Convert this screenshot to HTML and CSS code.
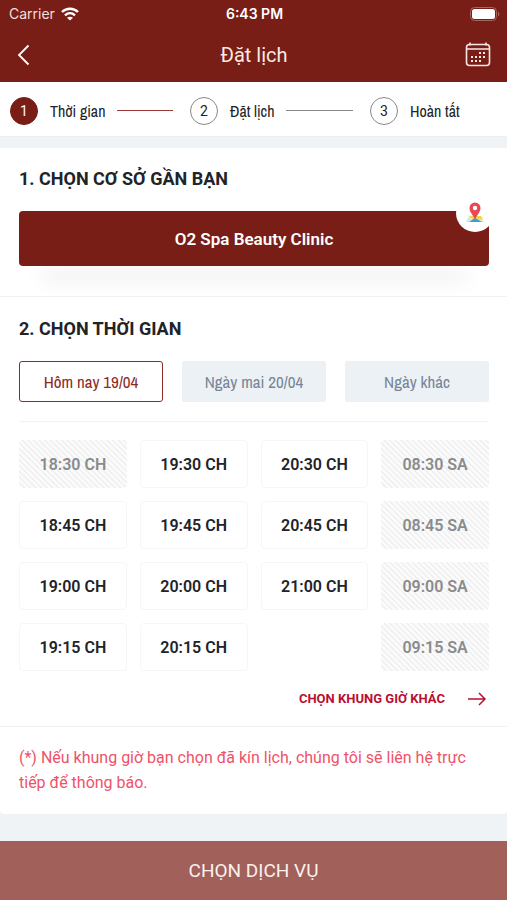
FILE: index.html
```html
<!DOCTYPE html>
<html lang="vi">
<head>
<meta charset="utf-8">
<meta name="viewport" content="width=device-width, initial-scale=1">
<title>Đặt lịch</title>
<link rel="stylesheet" href="styles.css">
</head>
<body>
<div class="app">
  <header class="top">
    <div class="status">
      <span class="carrier">Carrier
        <svg width="18" height="14" viewBox="0 0 18 14" fill="none" stroke="#fff" stroke-width="2.4" aria-hidden="true"><path d="M1 5C5.500 .6 12.500 .6 17 5M4 8.300c3-2.700 7-2.700 10 0"/><path d="M9 13.600 6 10.800c1.700-1.500 4.300-1.500 6 0z" fill="#fff" stroke="none"/></svg>
      </span>
      <span class="clock">6:43 PM</span>
      <svg class="battery" width="30" height="14" viewBox="0 0 30 14" aria-hidden="true"><rect x=".5" y=".5" width="26" height="13" rx="4" fill="none" stroke="#a8655e"/><rect x="2" y="2" width="23" height="10" rx="2.500" fill="#fff"/><path d="M28 4.500c1.800 1 1.800 4 0 5z" fill="#a8655e"/></svg>
    </div>
    <div class="bar">
      <button class="icon-button" aria-label="Quay lại"><svg width="14" height="22" viewBox="0 0 14 22" fill="none" stroke="#fff" stroke-width="1.800"><path d="M11.500 1.500 2 11l9.500 9.500"/></svg></button>
      <h1 class="title">Đặt lịch</h1>
      <button class="icon-button end" aria-label="Lịch"><svg width="26" height="26" viewBox="0 0 26 26" fill="none" stroke="#f8e8e5" stroke-width="1.600"><rect x="1.500" y="2.500" width="23" height="21" rx="3"/><path d="M1.500 7h23M5 .5v3M21 .5v3"/><path d="M14 11h2M18 11h2M6 15h2M10 15h2M14 15h2M18 15h2M6 19h2M10 19h2M14 19h2" stroke-width="2"/></svg></button>
    </div>
  </header>

  <ol class="steps">
    <li class="step active"><span class="num">1</span><span class="label">Thời gian</span><span class="line"></span></li>
    <li class="step"><span class="num">2</span><span class="label">Đặt lịch</span><span class="line"></span></li>
    <li class="step"><span class="num">3</span><span class="label">Hoàn tất</span></li>
  </ol>

  <main class="card">
    <section class="place">
      <h2 class="heading">1. CHỌN CƠ SỞ GẦN BẠN</h2>
      <div class="branch-wrap">
        <button class="branch">O2 Spa Beauty Clinic
          <span class="pin"><svg width="18" height="22" viewBox="0 0 18 22" aria-hidden="true"><path d="M3 14h12l3 6H0z" fill="#d4eadb"/><path d="M3 14h12l1.500 3L8 18.500z" fill="#f6d447"/><path d="M3 20l6-4 7 4z" fill="#3d9bd8"/><path d="M9 17C6 12 3.500 9.500 3.500 6a5.500 5.500 0 0 1 11 0c0 3.500-2.500 6-5.500 11z" fill="#eb4856"/><circle cx="9" cy="6" r="2.200" fill="#fff"/></svg></span>
        </button>
      </div>
    </section>

    <section class="time">
      <h2 class="heading">2. CHỌN THỜI GIAN</h2>
      <div class="days">
        <button class="day selected">Hôm nay 19/04</button>
        <button class="day">Ngày mai 20/04</button>
        <button class="day">Ngày khác</button>
      </div>
      <div class="slots">
        <button class="slot" disabled>18:30 CH</button>
        <button class="slot">18:45 CH</button>
        <button class="slot">19:00 CH</button>
        <button class="slot">19:15 CH</button>
        <button class="slot">19:30 CH</button>
        <button class="slot">19:45 CH</button>
        <button class="slot">20:00 CH</button>
        <button class="slot">20:15 CH</button>
        <button class="slot">20:30 CH</button>
        <button class="slot">20:45 CH</button>
        <button class="slot">21:00 CH</button>
        <span></span>
        <button class="slot" disabled>08:30 SA</button>
        <button class="slot" disabled>08:45 SA</button>
        <button class="slot" disabled>09:00 SA</button>
        <button class="slot" disabled>09:15 SA</button>
      </div>
      <a class="more" href="#">CHỌN KHUNG GIỜ KHÁC <svg width="18" height="14" viewBox="0 0 18 14" fill="none" stroke="#b80f32" stroke-width="1.500" aria-hidden="true"><path d="M0 7h17M11 1l6 6-6 6"/></svg></a>
    </section>

    <p class="note">(*) Nếu khung giờ bạn chọn đã kín lịch, chúng tôi sẽ liên hệ trực tiếp để thông báo.</p>
  </main>

  <button class="submit">CHỌN DỊCH VỤ</button>
</div>
</body>
</html>
```
FILE: styles.css
```css
* { box-sizing: border-box; }

body {
  margin: 0;
  background: #eff3f6;
  color: #212329;
  font-family: Roboto, "Noto Sans", sans-serif;
}

button {
  margin: 0;
  padding: 0;
  border: 0;
  font-family: inherit;
}

h1, h2, p, ol { margin: 0; padding: 0; }

svg { display: block; }

.app {
  min-height: 100vh;
  display: flex;
  flex-direction: column;
}

.top {
  background: #781e16;
  color: #fff;
}

.status, .bar {
  display: grid;
  grid-template-columns: 1fr auto 1fr;
  align-items: center;
}

.status {
  height: 27px;
  padding: 0 7px 0 9px;
  font-family: Inter, Roboto, sans-serif;
  font-size: 14px;
}

.carrier {
  display: flex;
  align-items: center;
  gap: 6px;
  color: #f3dfdc;
}

.clock { font-weight: 600; }

.battery { justify-self: end; }

.bar {
  height: 55px;
  padding: 0 16px 0 17px;
}

.icon-button {
  justify-self: start;
  background: none;
}

.icon-button.end { justify-self: end; }

.title {
  color: #f8e8e5;
  font-size: 20px;
  font-weight: 400;
}

.steps {
  display: grid;
  grid-template-columns: 1fr 1fr 90px;
  height: 55px;
  padding: 3px 47px 0 10px;
  background: #fff;
  border-bottom: 1px solid #e9eef0;
  list-style: none;
}

.step {
  display: flex;
  align-items: center;
  gap: 12px;
  padding-right: 17px;
  white-space: nowrap;
  font-family: "Archivo Narrow", "Roboto Condensed", "Liberation Sans Narrow", Roboto, sans-serif;
  font-size: 16px;
}

.step:last-child { padding-right: 0; }

.num {
  display: grid;
  flex: none;
  place-items: center;
  width: 28px;
  height: 28px;
  border: 1px solid #888;
  border-radius: 50%;
  font-family: Roboto, sans-serif;
  font-size: 14px;
}

.line {
  flex: 1;
  height: 1px;
  background: #888;
}

.active .num {
  background: #781e16;
  border-color: #781e16;
  color: #fff;
}

.active .line { background: #9b3a34; }

.card {
  margin-top: 11px;
  background: #fff;
  border-radius: 0 0 4px 4px;
}

.place {
  padding: 19px 18px 30px 19px;
  border-bottom: 1px solid #f0f2f3;
}

.heading {
  font-size: 18px;
  font-weight: 700;
  line-height: 24px;
}

.branch-wrap { margin-top: 20px; }

.branch {
  position: relative;
  display: block;
  width: 100%;
  height: 55px;
  border-radius: 4px;
  background: #781e16;
  box-shadow: 0 36px 20px -22px rgba(0, 0, 0, .08);
  color: #fff;
  font-size: 17px;
  font-weight: 600;
}

.pin {
  position: absolute;
  top: -17px;
  right: -5px;
  display: grid;
  place-items: center;
  width: 38px;
  height: 38px;
  border-radius: 50%;
  background: #fff;
}

.time {
  padding: 20px 18px 18px 19px;
  border-bottom: 1px solid #f0f2f3;
}

.days {
  display: grid;
  grid-template-columns: repeat(3, 1fr);
  gap: 19px;
  margin-top: 20px;
  padding-bottom: 19px;
  border-bottom: 1px solid #f0f2f3;
}

.day {
  height: 41px;
  border-radius: 2px;
  background: #ebf1f5;
  color: #788597;
  font-family: "Archivo Narrow", "Roboto Condensed", "Liberation Sans Narrow", Roboto, sans-serif;
  font-size: 17px;
}

.day.selected {
  border: 1px solid #8d2a25;
  border-radius: 3px;
  background: #fff;
  color: #8d2a25;
}

.slots {
  display: grid;
  grid-template-rows: repeat(4, 48px);
  grid-auto-columns: 1fr;
  grid-auto-flow: column;
  gap: 13px;
  margin-top: 18px;
}

.slot {
  border: 1px solid #f5f6f7;
  border-radius: 4px;
  background: #fff;
  color: #212329;
  font-size: 16px;
  font-weight: 600;
}

.slot:disabled {
  border: 0;
  background: repeating-linear-gradient(45deg, #eaeaea 0, #fbfbfb 1px 3px, #eaeaea 4px);
  color: #8a8b8c;
}

.more {
  display: flex;
  align-items: center;
  justify-content: flex-end;
  gap: 23px;
  margin-top: 19px;
  padding-right: 3px;
  color: #b80f32;
  font-size: 13px;
  font-weight: 700;
  line-height: 18px;
  text-decoration: none;
}

.note {
  padding: 18px 19px 19px;
  color: #ee5269;
  font-size: 16px;
  line-height: 25px;
}

.submit {
  height: 59px;
  margin-top: auto;
  background: #a16059;
  color: #fbf1ef;
  font-size: 19px;
}
```
